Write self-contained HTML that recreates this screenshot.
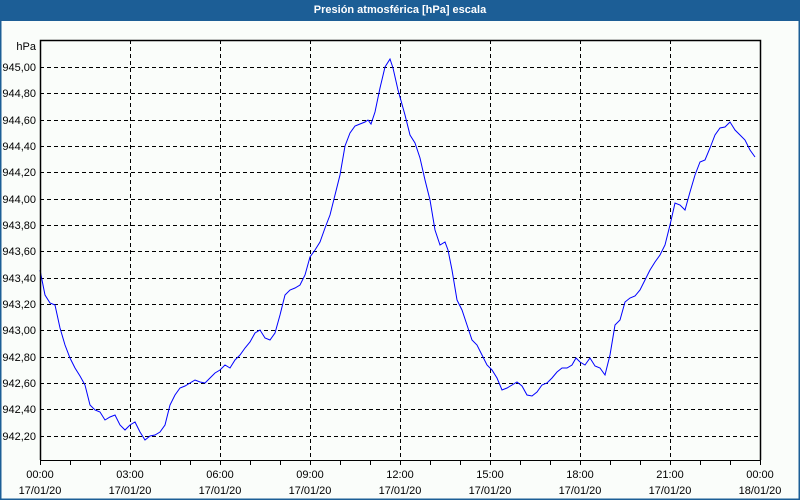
<!DOCTYPE html>
<html><head><meta charset="utf-8"><style>
body{margin:0;width:800px;height:500px;overflow:hidden;background:#fafdfa;font-family:"Liberation Sans",sans-serif;}
.t{position:absolute;left:0;top:0;width:800px;height:20px;background:#1c5e96;color:#fff;font-weight:bold;font-size:11px;text-align:center;line-height:20px;}
</style></head><body>
<div class="t">Presión atmosférica [hPa] escala</div>
<svg width="800" height="500" style="position:absolute;left:0;top:0" font-family="Liberation Sans, sans-serif" font-size="11">
<rect x="0.5" y="20" width="799" height="479.5" fill="none" stroke="#1c5e96" stroke-width="2"/>
<g stroke="#000" stroke-dasharray="4,3" stroke-width="1">
<line x1="40" y1="67.5" x2="760" y2="67.5"/><line x1="40" y1="93.5" x2="760" y2="93.5"/><line x1="40" y1="120.5" x2="760" y2="120.5"/><line x1="40" y1="146.5" x2="760" y2="146.5"/><line x1="40" y1="172.5" x2="760" y2="172.5"/><line x1="40" y1="199.5" x2="760" y2="199.5"/><line x1="40" y1="225.5" x2="760" y2="225.5"/><line x1="40" y1="251.5" x2="760" y2="251.5"/><line x1="40" y1="278.5" x2="760" y2="278.5"/><line x1="40" y1="304.5" x2="760" y2="304.5"/><line x1="40" y1="330.5" x2="760" y2="330.5"/><line x1="40" y1="357.5" x2="760" y2="357.5"/><line x1="40" y1="383.5" x2="760" y2="383.5"/><line x1="40" y1="409.5" x2="760" y2="409.5"/><line x1="40" y1="436.5" x2="760" y2="436.5"/>
<line x1="130.5" y1="40" x2="130.5" y2="460"/><line x1="220.5" y1="40" x2="220.5" y2="460"/><line x1="310.5" y1="40" x2="310.5" y2="460"/><line x1="400.5" y1="40" x2="400.5" y2="460"/><line x1="490.5" y1="40" x2="490.5" y2="460"/><line x1="580.5" y1="40" x2="580.5" y2="460"/><line x1="670.5" y1="40" x2="670.5" y2="460"/>
</g>
<polyline fill="none" stroke="#00f" stroke-width="1" points="40,270 45,295 50,303 55,305 60,328 65,345 70,358 75,368 80,376 85,385 90,405 95,410 100,412 105,420 110,417 115,415 120,425 125,430 130,425 135,422 140,432 145,440 150,436 155,435 160,432 165,425 170,405 175,395 180,388 185,386 190,383 195,380 200,382 205,383 210,378 215,373 220,370 225,365 230,368 235,360 240,355 245,348 250,342 255,333 260,330 265,338 270,340 275,333 280,315 285,295 290,290 295,288 300,285 305,275 310,257 315,250 320,242 325,228 330,215 335,195 340,175 345,146 350,133 355,126 360,124 365,122 368,120 371,124 375,112 380,88 385,67 390,59 393,68 398,90 405,115 410,135 415,143 420,158 425,180 430,200 435,230 440,245 445,242 448,250 452,270 457,300 462,310 467,325 472,340 477,345 482,355 487,365 492,370 497,378 502,390 507,388 512,385 517,382 522,386 527,395 532,396 537,392 542,385 547,383 552,378 557,372 562,368 567,368 572,365 576,358 580,362 585,365 590,358 595,366 600,368 605,375 610,355 615,325 620,320 625,302 630,298 635,296 640,290 645,280 650,270 655,262 660,255 665,245 670,225 675,203 680,205 685,210 690,192 695,175 700,162 705,160 710,148 715,135 720,128 725,127 730,122 735,130 740,135 745,140 750,150 755,157"/>
<polyline fill="none" stroke="#000" stroke-width="1.5" points="40.5,460 40.5,40.5 760.5,40.5 760.5,460"/>
<line x1="40" y1="460.5" x2="761" y2="460.5" stroke="#000"/>
<g stroke="#000">
<line x1="70.5" y1="460" x2="70.5" y2="465"/><line x1="100.5" y1="460" x2="100.5" y2="465"/><line x1="130.5" y1="460" x2="130.5" y2="465"/><line x1="160.5" y1="460" x2="160.5" y2="465"/><line x1="190.5" y1="460" x2="190.5" y2="465"/><line x1="220.5" y1="460" x2="220.5" y2="465"/><line x1="250.5" y1="460" x2="250.5" y2="465"/><line x1="280.5" y1="460" x2="280.5" y2="465"/><line x1="310.5" y1="460" x2="310.5" y2="465"/><line x1="340.5" y1="460" x2="340.5" y2="465"/><line x1="370.5" y1="460" x2="370.5" y2="465"/><line x1="400.5" y1="460" x2="400.5" y2="465"/><line x1="430.5" y1="460" x2="430.5" y2="465"/><line x1="460.5" y1="460" x2="460.5" y2="465"/><line x1="490.5" y1="460" x2="490.5" y2="465"/><line x1="520.5" y1="460" x2="520.5" y2="465"/><line x1="550.5" y1="460" x2="550.5" y2="465"/><line x1="580.5" y1="460" x2="580.5" y2="465"/><line x1="610.5" y1="460" x2="610.5" y2="465"/><line x1="640.5" y1="460" x2="640.5" y2="465"/><line x1="670.5" y1="460" x2="670.5" y2="465"/><line x1="700.5" y1="460" x2="700.5" y2="465"/><line x1="730.5" y1="460" x2="730.5" y2="465"/><line x1="40.5" y1="460" x2="40.5" y2="465"/><line x1="760.5" y1="460" x2="760.5" y2="465"/>
</g>
<g text-anchor="end" fill="#000">
<text x="36" y="50">hPa</text>
<text x="36" y="71">945,00</text><text x="36" y="97">944,80</text><text x="36" y="124">944,60</text><text x="36" y="150">944,40</text><text x="36" y="176">944,20</text><text x="36" y="203">944,00</text><text x="36" y="229">943,80</text><text x="36" y="255">943,60</text><text x="36" y="282">943,40</text><text x="36" y="308">943,20</text><text x="36" y="334">943,00</text><text x="36" y="361">942,80</text><text x="36" y="387">942,60</text><text x="36" y="413">942,40</text><text x="36" y="440">942,20</text>
</g>
<g text-anchor="middle" fill="#000">
<text x="40" y="478">00:00</text><text x="40" y="494">17/01/20</text>
<text x="130" y="478">03:00</text><text x="130" y="494">17/01/20</text>
<text x="220" y="478">06:00</text><text x="220" y="494">17/01/20</text>
<text x="310" y="478">09:00</text><text x="310" y="494">17/01/20</text>
<text x="400" y="478">12:00</text><text x="400" y="494">17/01/20</text>
<text x="490" y="478">15:00</text><text x="490" y="494">17/01/20</text>
<text x="580" y="478">18:00</text><text x="580" y="494">17/01/20</text>
<text x="670" y="478">21:00</text><text x="670" y="494">17/01/20</text>
<text x="760" y="478">00:00</text><text x="760" y="494">18/01/20</text>
</g>
</svg>
</body></html>
